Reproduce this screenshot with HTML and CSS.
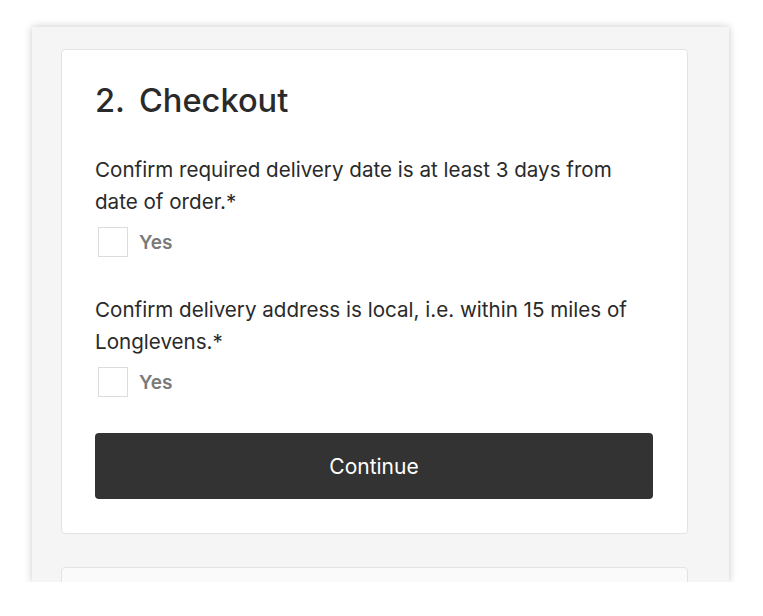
FILE: index.html
```html
<!DOCTYPE html>
<html>
<head>
<meta charset="utf-8">
<link rel="stylesheet" href="styles.css">
</head>
<body>
<div class="panel">
  <div class="card">
    <h2 class="title"><span class="num">2.</span>Checkout</h2>
    <div class="field">
      <p class="question">Confirm required delivery date is at least 3 days from date of order.*</p>
      <label class="option"><span class="box"></span><span class="opt-text">Yes</span></label>
    </div>
    <div class="field">
      <p class="question">Confirm delivery address is local, i.e. within 15 miles of Longlevens.*</p>
      <label class="option"><span class="box"></span><span class="opt-text">Yes</span></label>
    </div>
    <button class="continue">Continue</button>
  </div>
  <div class="card next"></div>
</div>
</body>
</html>
```

FILE: styles.css
```css
html, body {
  margin: 0;
  padding: 0;
  background: #fff;
}
body {
  font-family: Inter, "Liberation Sans", sans-serif;
  color: #2a2a2a;
  padding: 27px 0 0 32px;
}
.panel {
  width: 697px;
  height: 555px;
  background: #f5f5f5;
  box-shadow: 0 0 8px rgba(0,0,0,0.22);
  overflow: hidden;
  box-sizing: border-box;
  padding: 22px 41px 0 29px;
}
.card {
  background: #fff;
  border: 1px solid #e3e3e3;
  border-radius: 4px;
  padding: 28px 34px 34px 33px;
}
.card.next {
  margin-top: 33px;
  height: 60px;
  background: #fafafa;
  padding: 0;
}
.title {
  margin: 0 0 32px 0;
  font-size: 32.6px;
  font-weight: 500;
  line-height: 44px;
  color: #2a2a2a;
}
.num {
  margin-right: 14px;
}
.field {
  margin-bottom: 37px;
}
.field + .field {
  margin-bottom: 36px;
}
.question {
  margin: 0;
  font-size: 20.6px;
  line-height: 32px;
  color: #2a2a2a;
  width: 545px;
}
.option {
  display: flex;
  align-items: center;
  margin-top: 9px;
  height: 30px;
  padding-left: 3px;
}
.box {
  width: 28px;
  height: 28px;
  border: 1px solid #dcdcdc;
  background: #fff;
  margin-right: 11px;
}
.opt-text {
  font-size: 19px;
  font-weight: 600;
  color: #7a7a7a;
}
.continue {
  display: block;
  width: 100%;
  height: 66px;
  background: #333;
  color: #fff;
  border: none;
  border-radius: 4px;
  font-family: Inter, "Liberation Sans", sans-serif;
  font-size: 21px;
  font-weight: 400;
}
```
